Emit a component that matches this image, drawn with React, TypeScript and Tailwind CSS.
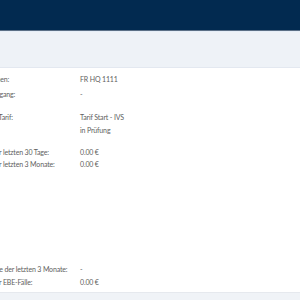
import React from "react";

function Row({
  label,
  value,
  className = "",
  labelClass = "w-[112px] -ml-[32px]",
}: {
  label: string;
  value: string;
  className?: string;
  labelClass?: string;
}) {
  return (
    <div className={`flex h-[12px] items-center whitespace-nowrap ${className}`}>
      <div className={`shrink-0 overflow-hidden ${labelClass}`}>{label}</div>
      <div>{value}</div>
    </div>
  );
}

export default function App() {
  return (
    <div
      className="w-[300px] h-[300px] overflow-hidden bg-[#f0f3f7] flex flex-col"
      style={{ fontFamily: 'Lato, "Open Sans", sans-serif' }}
    >
      <div className="h-[30px] shrink-0 bg-[#022a50]" />
      <div className="h-px shrink-0 bg-[#5b6f86]" />
      <div className="h-[36px] shrink-0 bg-[#eef2f7] border-t border-[#e6eef7]" />
      <div className="h-[226px] shrink-0 bg-white border-t border-[#e3e8f0] border-b border-b-[#e6e9ee] text-[7px] tracking-[-0.15px] text-[#606060] pt-[5px]">
        <Row label="Kennzeichen:" value="FR HQ 1111" labelClass="w-[110px] -ml-[30px]" />
        <Row label="Letzter Zugang:" value="-" className="mt-[3px]" labelClass="w-[110px] -ml-[30px]" />
        <Row label="Gebuchter Tarif:" value="Tarif Start - IVS" className="mt-[11px]" labelClass="w-[114px] -ml-[34px]" />
        <Row label="" value="in Prüfung" className="mt-[1px]" />
        <Row label="Umsatz der letzten 30 Tage:" value="0.00 €" className="mt-[10px]" />
        <Row label="Umsatz der letzten 3 Monate:" value="0.00 €" />
        <Row
          label="Stornoquote der letzten 3 Monate:"
          value="-"
          className="mt-[93px]"
          labelClass="w-[114px] -ml-[34px]"
        />
        <Row label="Umsatz der EBE-Fälle:" value="0.00 €" className="mt-[1px]" />
      </div>
    </div>
  );
}
